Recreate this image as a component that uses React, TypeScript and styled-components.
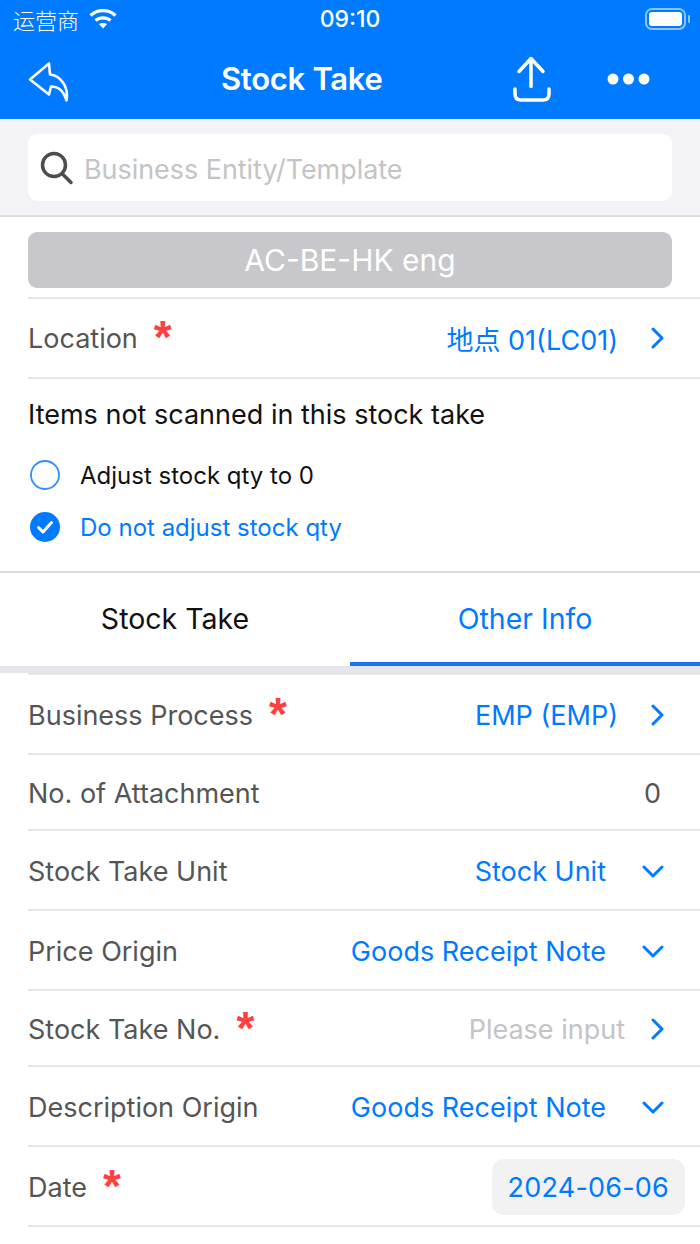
import { createGlobalStyle } from "styled-components";
import styled from "styled-components";

const GlobalStyle = createGlobalStyle`
  html, body {
    margin: 0;
    padding: 0;
    background: #ffffff;
  }
  body {
    font-family: Inter, "Noto Sans CJK SC", sans-serif;
  }
`;

const Page = styled.div`
  width: 700px;
  height: 1244px;
  overflow: hidden;
  background: #ffffff;
`;

const Blue = styled.header`
  background: #007aff;
  height: 119px;
  color: #ffffff;
`;

const StatusBar = styled.div`
  height: 38px;
  display: grid;
  grid-template-columns: 1fr auto 1fr;
  align-items: center;
  padding: 0 9px;
`;

const Carrier = styled.div`
  display: flex;
  align-items: center;
  gap: 9px;
  padding-left: 4px;
  font-size: 22px;
  font-family: "Noto Sans CJK SC", sans-serif;
  font-weight: 300;
`;

const Clock = styled.div`
  font-size: 23px;
  font-weight: 500;
`;

const Battery = styled.div`
  justify-self: end;
  display: flex;
`;

const NavBar = styled.div`
  height: 81px;
  display: flex;
  align-items: center;
  padding: 0 50px 2px 27px;
`;

const NavTitle = styled.div`
  font-size: 31px;
  font-weight: 600;
  margin-left: 152px;
  white-space: nowrap;
  letter-spacing: -0.3px;
`;

const NavActions = styled.div`
  margin-left: auto;
  display: flex;
  align-items: center;
  gap: 55px;
`;

const SearchBand = styled.div`
  background: #f2f2f7;
  height: 98px;
  box-sizing: border-box;
  padding: 15px 28px;
  border-bottom: 2px solid #dfdfe3;
`;

const SearchBox = styled.div`
  height: 67px;
  background: #ffffff;
  border-radius: 9px;
  display: flex;
  align-items: center;
  gap: 10px;
  padding-left: 12px;
  font-size: 26.9px;
  color: #c4c4c6;
`;

const SearchHint = styled.span`
  padding-top: 3px;
`;

const EntitySection = styled.div`
  padding: 15px 0 0 28px;
`;

const EntityButton = styled.div`
  height: 56px;
  margin-right: 28px;
  margin-bottom: 9px;
  background: #c7c7cc;
  border-radius: 9px;
  color: #ffffff;
  font-size: 30px;
  display: flex;
  align-items: center;
  justify-content: center;
`;

const Row = styled.div<{ $height: number }>`
  height: ${(p) => p.$height}px;
  box-sizing: border-box;
  margin-left: 28px;
  padding-right: 14px;
  padding-top: 2px;
  border-top: 2px solid #e5e5ea;
  display: flex;
  align-items: center;
  font-size: 27px;
  color: #555555;
`;

const LocationRow = styled(Row)`
  padding-top: 0;
`;

const Star = styled.span`
  color: #ff4040;
  font-size: 46px;
  font-weight: 700;
  line-height: 20px;
  height: 20px;
  margin-left: 16px;
  position: relative;
  top: -1px;
  font-family: "Liberation Sans", sans-serif;
`;

const RowValue = styled.div<{ $muted?: boolean }>`
  margin-left: auto;
  padding-right: 16px;
  color: ${(p) => (p.$muted ? "#c4c4c6" : "#007aff")};
  display: flex;
  align-items: center;
  white-space: nowrap;
`;

const RightSlot = styled.span`
  display: flex;
  justify-content: center;
  width: 26px;
  margin-left: 26px;
`;

const HintSlot = styled(RightSlot)`
  margin-left: 19px;
`;

const DownSlot = styled.span`
  display: flex;
  justify-content: center;
  width: 26px;
  margin: 0 4px 0 34px;
`;

const CountValue = styled.div`
  margin-left: auto;
  padding-right: 25px;
  color: #555555;
`;

const DateChip = styled.div`
  margin-left: auto;
  margin-right: 1px;
  height: 56px;
  padding: 0 16px;
  display: flex;
  align-items: center;
  background: #f2f2f2;
  border-radius: 12px;
  color: #007aff;
  font-size: 27px;
  letter-spacing: 0.2px;
`;

const OptionSection = styled.div`
  margin-left: 28px;
  height: 195px;
  box-sizing: border-box;
  border-top: 2px solid #e5e5ea;
  padding-top: 20px;
`;

const OptionTitle = styled.div`
  font-size: 27px;
  color: #111111;
  line-height: 32px;
  margin-bottom: 18px;
`;

const OptionRow = styled.div<{ $active?: boolean }>`
  height: 52px;
  display: flex;
  align-items: center;
  gap: 20px;
  padding-left: 2px;
  font-size: 24px;
  color: ${(p) => (p.$active ? "#007aff" : "#111111")};
`;

const Tabs = styled.div`
  display: flex;
  height: 95px;
  box-sizing: border-box;
  border-top: 2px solid #dcdcdc;
  margin-top: -1px;
`;

const Tab = styled.div<{ $active?: boolean }>`
  flex: 1;
  display: flex;
  align-items: center;
  justify-content: center;
  font-size: 28.5px;
  box-sizing: border-box;
  padding-top: 2px;
  color: ${(p) => (p.$active ? "#007aff" : "#111111")};
  border-bottom: 4px solid ${(p) => (p.$active ? "#1a73f0" : "transparent")};
`;

const TabGap = styled.div`
  height: 7px;
  background: #e5e5ea;
`;

const WifiIcon = () => (
  <svg width="30" height="22" viewBox="0 0 30 22" fill="none" stroke="#ffffff" strokeWidth="3.2">
    <path d="M2.500 7.500 C9.500 1 20.500 1 27.500 7.500" />
    <path d="M7.500 12.500 C11.500 9 18.500 9 22.500 12.500" />
    <path d="M10.800 16 C13 14.500 17 14.500 19.200 16 L15 20.500 Z" fill="#ffffff" stroke="none" />
  </svg>
);

const BatteryIcon = () => (
  <svg width="46" height="24" viewBox="0 0 46 24">
    <rect x="1" y="2" width="39" height="20" rx="6" fill="none" stroke="#8cc2ff" strokeWidth="2" />
    <rect x="4" y="5" width="33" height="14" rx="3" fill="#ffffff" />
    <rect x="43" y="8" width="2" height="8" rx="1" fill="#8cc2ff" />
  </svg>
);

const BackIcon = () => (
  <svg width="42" height="48" viewBox="0 0 42 48" fill="none" stroke="#ffffff" strokeWidth="2.600" strokeLinejoin="round">
    <path d="M3 24.500 L22 8.500 L23 19.500 C33 20.500 42 31 39.500 45.500 C37 37 32 31.500 24 31.500 L22 39.500 Z" />
  </svg>
);

const ShareIcon = () => (
  <svg width="40" height="46" viewBox="0 0 40 46" fill="none" stroke="#ffffff" strokeWidth="3.500" strokeLinecap="round" strokeLinejoin="round">
    <path d="M19 30.500 V3" />
    <path d="M7 15.500 L19 2.500 L31 15.500" />
    <path d="M3 33 V38 C3 42 5 44 9 44 H31 C35 44 37 42 37 38 V33" />
  </svg>
);

const MoreIcon = () => (
  <svg width="43" height="14" viewBox="0 0 43 14" fill="#ffffff">
    <circle cx="6" cy="7" r="5.500" />
    <circle cx="21.500" cy="7" r="5.500" />
    <circle cx="37" cy="7" r="5.500" />
  </svg>
);

const SearchIcon = () => (
  <svg width="34" height="34" viewBox="0 0 34 34" fill="none" stroke="#4d4d4d" strokeWidth="3.500" strokeLinecap="round">
    <circle cx="14" cy="14" r="11.500" />
    <path d="M22.500 23 L31 31.500" />
  </svg>
);

const ChevronRight = () => (
  <svg width="14" height="22" viewBox="0 0 14 22" fill="none" stroke="#007aff" strokeWidth="3" strokeLinecap="round" strokeLinejoin="round">
    <path d="M3 2 L12 11 L3 20" />
  </svg>
);

const ChevronDown = () => (
  <svg width="22" height="14" viewBox="0 0 22 14" fill="none" stroke="#007aff" strokeWidth="3" strokeLinecap="round" strokeLinejoin="round">
    <path d="M2 3 L11 12 L20 3" />
  </svg>
);

const RadioOff = () => (
  <svg width="30" height="30" viewBox="0 0 30 30" fill="none">
    <circle cx="15" cy="15" r="14" stroke="#2f8fff" strokeWidth="1.800" />
  </svg>
);

const RadioOn = () => (
  <svg width="30" height="30" viewBox="0 0 30 30" fill="none">
    <circle cx="15" cy="15" r="15" fill="#007aff" />
    <path d="M8.500 15.500 L13 20 L21.500 10.500" stroke="#ffffff" strokeWidth="3" strokeLinecap="round" strokeLinejoin="round" />
  </svg>
);

const App = () => {
  return (
    <Page>
      <GlobalStyle />
      <Blue>
        <StatusBar>
          <Carrier>
            运营商
            <WifiIcon />
          </Carrier>
          <Clock>09:10</Clock>
          <Battery>
            <BatteryIcon />
          </Battery>
        </StatusBar>
        <NavBar>
          <BackIcon />
          <NavTitle>Stock Take</NavTitle>
          <NavActions>
            <ShareIcon />
            <MoreIcon />
          </NavActions>
        </NavBar>
      </Blue>
      <SearchBand>
        <SearchBox>
          <SearchIcon />
          <SearchHint>Business Entity/Template</SearchHint>
        </SearchBox>
      </SearchBand>
      <EntitySection>
        <EntityButton>AC-BE-HK eng</EntityButton>
      </EntitySection>
      <LocationRow $height={80}>
        Location
        <Star>*</Star>
        <RowValue>
          地点 01(LC01)
          <RightSlot>
            <ChevronRight />
          </RightSlot>
        </RowValue>
      </LocationRow>
      <OptionSection>
        <OptionTitle>Items not scanned in this stock take</OptionTitle>
        <OptionRow>
          <RadioOff />
          Adjust stock qty to 0
        </OptionRow>
        <OptionRow $active>
          <RadioOn />
          Do not adjust stock qty
        </OptionRow>
      </OptionSection>
      <Tabs>
        <Tab>Stock Take</Tab>
        <Tab $active>Other Info</Tab>
      </Tabs>
      <TabGap />
      <Row $height={80}>
        Business Process
        <Star>*</Star>
        <RowValue>
          EMP (EMP)
          <RightSlot>
            <ChevronRight />
          </RightSlot>
        </RowValue>
      </Row>
      <Row $height={76}>
        No. of Attachment
        <CountValue>0</CountValue>
      </Row>
      <Row $height={80}>
        Stock Take Unit
        <RowValue>
          Stock Unit
          <DownSlot>
            <ChevronDown />
          </DownSlot>
        </RowValue>
      </Row>
      <Row $height={80}>
        Price Origin
        <RowValue>
          Goods Receipt Note
          <DownSlot>
            <ChevronDown />
          </DownSlot>
        </RowValue>
      </Row>
      <Row $height={76}>
        Stock Take No.
        <Star>*</Star>
        <RowValue $muted>
          Please input
          <HintSlot>
            <ChevronRight />
          </HintSlot>
        </RowValue>
      </Row>
      <Row $height={80}>
        Description Origin
        <RowValue>
          Goods Receipt Note
          <DownSlot>
            <ChevronDown />
          </DownSlot>
        </RowValue>
      </Row>
      <Row $height={80}>
        Date
        <Star>*</Star>
        <DateChip>2024-06-06</DateChip>
      </Row>
      <Row $height={18} />
    </Page>
  );
};

export default App;
